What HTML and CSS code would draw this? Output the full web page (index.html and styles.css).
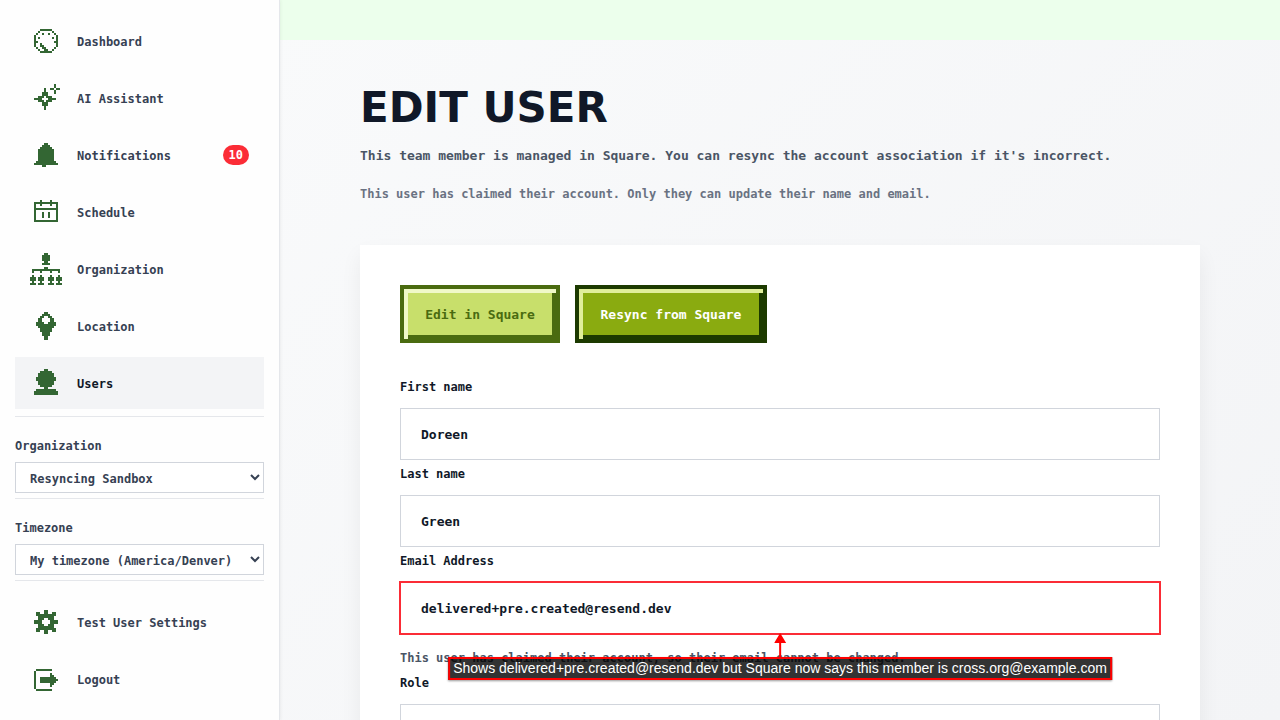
FILE: index.html
```html
<!DOCTYPE html>
<html lang="en">
<head>
    <meta charset="UTF-8">
    <meta name="viewport" content="width=device-width, initial-scale=1.0">
    <title>Edit User</title>
    <link rel="stylesheet" href="styles.css">
</head>
<body>

<div class="app">
    <aside class="sidebar">
        <nav class="nav">
            <a class="nav-item" href="#">
                <svg class="icon" viewBox="0 -.5 16 16"><path d="M5 2h6M4 3h1M11 3h1M3 4h1M6 4h1M9 4h1M12 4h1M2 5h1M13 5h1M2 6h1M4 6h1M11 6h1M13 6h1M2 7h1M13 7h1M2 8h2M12 8h2M2 9h1M5 9h1M13 9h1M2 10h1M5 10h2M13 10h1M3 11h1M6 11h2M12 11h1M4 12h1M7 12h2M11 12h1M5 13h6"/></svg>
                <span class="nav-text">Dashboard</span>
            </a>
            <a class="nav-item" href="#">
                <svg class="icon" viewBox="0 -.5 16 16"><path d="M12 1h1M12 2h1M10 3h2M13 3h2M12 4h1M12 5h1M7 3h1M7 4h1M6 5h3M6 6h3M4 7h3M8 7h3M2 8h4M9 8h4M4 9h3M8 9h3M6 10h3M6 11h3M7 12h1M7 13h1"/></svg>
                <span class="nav-text">AI Assistant</span>
            </a>
            <a class="nav-item" href="#">
                <svg class="icon" viewBox="0 -.5 16 16"><path d="M7 2h2M6 3h4M5 4h6M4 5h8M4 6h8M4 7h8M4 8h8M4 9h8M4 10h8M3 11h10M2 12h12M6 13h2"/></svg>
                <span class="nav-text">Notifications</span>
                <span class="badge">10</span>
            </a>
            <a class="nav-item" href="#">
                <svg class="icon" viewBox="0 -.5 16 16"><path d="M5 2h1M10 2h1M2 3h12M2 4h1M5 4h1M10 4h1M13 4h1M2 5h1M13 5h1M2 6h12M2 7h1M13 7h1M2 8h1M6 8h1M9 8h1M13 8h1M2 9h1M6 9h1M9 9h1M13 9h1M2 10h1M6 10h1M9 10h1M13 10h1M2 11h1M13 11h1M2 12h12"/></svg>
                <span class="nav-text">Schedule</span>
            </a>
            <a class="nav-item" href="#">
                <svg class="icon" viewBox="0 -.5 16 16"><path d="M7 0h2M6 1h4M6 2h4M6 3h4M7 4h2M6 5h4M7 7h2M1 8h14M1 9h1M5 9h1M10 9h1M14 9h1M1 11h1M5 11h1M10 11h1M14 11h1M0 12h3M4 12h3M9 12h3M13 12h3M0 13h3M4 13h3M9 13h3M13 13h3M1 14h1M5 14h1M10 14h1M14 14h1M0 15h3M4 15h3M9 15h3M13 15h3"/></svg>
                <span class="nav-text">Organization</span>
            </a>
            <a class="nav-item" href="#">
                <svg class="icon" viewBox="0 -.5 16 16"><path d="M7 1h2M6 2h4M5 3h2M9 3h2M4 4h2M10 4h2M4 5h2M10 5h2M3 6h4M9 6h4M3 7h10M4 8h8M5 9h6M5 10h6M6 11h4M6 12h4M7 13h2M7 14h2"/></svg>
                <span class="nav-text">Location</span>
            </a>
            <a class="nav-item active" href="#">
                <svg class="icon" viewBox="0 -.5 16 16"><path d="M7 1h2M5 2h6M4 3h8M4 4h8M3 5h10M3 6h10M4 7h8M4 8h8M5 9h6M7 10h2M3 11h10M2 12h12M2 13h12"/></svg>
                <span class="nav-text">Users</span>
            </a>
        </nav>

        <div class="picker">
            <label for="organization">Organization</label>
            <select id="organization">
                <option>Resyncing Sandbox</option>
            </select>
        </div>
        <div class="picker">
            <label for="timezone">Timezone</label>
            <select id="timezone">
                <option>My timezone (America/Denver)</option>
            </select>
        </div>

        <nav class="nav nav-bottom">
            <a class="nav-item" href="#">
                <svg class="icon" viewBox="0 -.5 16 16"><path d="M7 2h2M3 3h2M7 3h2M11 3h2M3 4h10M4 5h8M4 6h3M9 6h3M2 7h4M10 7h4M2 8h4M10 8h4M4 9h3M9 9h3M4 10h8M3 11h10M3 12h2M7 12h2M11 12h2M7 13h2"/></svg>
                <span class="nav-text">Test User Settings</span>
            </a>
            <a class="nav-item" href="#">
                <svg class="icon" viewBox="0 -.5 16 16"><path d="M3 3h8M2 4h1M2 5h1M10 5h1M2 6h1M10 6h2M2 7h1M5 7h8M2 8h1M5 8h9M2 9h1M5 9h8M2 10h1M10 10h2M2 11h1M10 11h1M2 12h1M3 13h8"/></svg>
                <span class="nav-text">Logout</span>
            </a>
        </nav>
    </aside>

    <div class="content">
        <div class="topbar"></div>
        <main class="page">
            <h1>EDIT USER</h1>
            <p class="lead">This team member is managed in Square. You can resync the account association if it's incorrect.</p>
            <p class="note">This user has claimed their account. Only they can update their name and email.</p>

            <form class="card">
                <div class="actions">
                    <button type="button" class="btn btn-light">Edit in Square</button>
                    <button type="button" class="btn btn-dark">Resync from Square</button>
                </div>

                <label for="first-name">First name</label>
                <input type="text" id="first-name" value="Doreen">

                <label for="last-name">Last name</label>
                <input type="text" id="last-name" value="Green">

                <label for="email">Email Address</label>
                <div class="callout-anchor">
                    <input type="email" id="email" class="highlight" value="delivered+pre.created@resend.dev">
                    <div class="callout">
                        <svg class="arrow" viewBox="0 0 12 24"><path d="M6 0l6 10H7v14H5V10H0z"/></svg>
                        <div class="callout-text">Shows delivered+pre.created@resend.dev but Square now says this member is cross.org@example.com</div>
                    </div>
                </div>
                <p class="help">This user has claimed their account, so their email cannot be changed.</p>

                <label for="role">Role</label>
                <select id="role" class="field">
                    <option></option>
                </select>
            </form>
        </main>
    </div>
</div>

</body>
</html>
```
FILE: styles.css
```css
* {
    box-sizing: border-box;
}

body {
    margin: 0;
    font-family: "DejaVu Sans Mono", monospace;
    font-size: 12px;
    font-weight: bold;
    line-height: 20px;
    color: #364153;
}

.app {
    display: flex;
    height: 100vh;
    overflow: hidden;
}

/* Sidebar */
.sidebar {
    position: relative;
    z-index: 1;
    flex: 0 0 280px;
    padding: 15px;
    background: #fefefe;
    border-right: 1px solid #e5e7eb;
    box-shadow: 1px 0 3px rgba(0, 0, 0, 0.05);
}

.nav {
    display: flex;
    flex-direction: column;
    gap: 5px;
    margin-bottom: 7px;
}

.nav-bottom {
    border-top: 1px solid #e5e7eb;
    padding-top: 15px;
}

.nav-item {
    display: flex;
    align-items: center;
    gap: 15px;
    height: 52px;
    padding: 0 15px;
    color: #364153;
    text-decoration: none;
}

.nav-item.active {
    background: #f3f4f6;
    color: #101828;
}

.nav-text {
    padding-top: 2px;
}

.icon {
    width: 32px;
    height: 32px;
    stroke: #336633;
    stroke-width: 1;
    shape-rendering: crispEdges;
}

.badge {
    margin-left: auto;
    padding: 0 6px;
    border-radius: 10px;
    background: #fb2c36;
    color: #fff;
}

.picker {
    border-top: 1px solid #e5e7eb;
    padding: 19px 0 5px;
}

.picker label {
    display: block;
    margin-bottom: 6px;
}

.picker select {
    display: block;
    width: 100%;
    height: 31px;
    padding: 2px 10px 0;
    border: 1px solid #d1d5dc;
    border-radius: 0;
    background-color: #fff;
    color: #364153;
    font: inherit;
}

/* Page */
.content {
    flex: 1;
    min-width: 0;
    background: linear-gradient(135deg, #f9fafb, #f3f4f6);
}

.topbar {
    height: 40px;
    background: #ecffec;
}

.page {
    padding: 40px 80px;
}

h1 {
    margin: 0;
    font-family: "DejaVu Sans", sans-serif;
    font-size: 42px;
    line-height: 56px;
    color: #101828;
}

.lead {
    margin: 8px 0 16px;
    font-size: 13px;
    line-height: 24px;
    color: #4a5565;
}

.note {
    margin: 0 0 41px;
    color: #6a7282;
}

.card {
    padding: 40px;
    background: #fff;
    box-shadow: 0 10px 20px rgba(0, 0, 0, 0.06);
}

.actions {
    display: flex;
    gap: 15px;
    margin-bottom: 30px;
}

.btn {
    min-width: 160px;
    height: 58px;
    padding: 2px 20px 0;
    border: 4px solid;
    font: inherit;
    font-size: 13px;
    cursor: pointer;
}

.btn-light {
    border-color: #4a6b10;
    background: #c8df6b;
    box-shadow: inset 4px 4px 0 #f0f9c8, inset -4px -4px 0 #4a6b10;
    color: #4a6b10;
}

.btn-dark {
    min-width: 192px;
    border-color: #1c3a00;
    background: #8aab10;
    box-shadow: inset 4px 4px 0 #e0ee9a, inset -4px -4px 0 #1c3a00;
    color: #fff;
}

.card label {
    display: block;
    padding: 4px 0 11px;
    color: #101828;
}

.card input,
.field {
    display: block;
    width: 100%;
    height: 52px;
    padding: 0 20px;
    border: 1px solid #d1d5dc;
    border-radius: 0;
    background-color: #fff;
    color: #101828;
    font: inherit;
    font-size: 13px;
}

.card .highlight {
    border-color: #fb2c36;
    outline: 1px solid #fb2c36;
}

.help {
    margin: 0;
    padding: 14px 0 1px;
    color: #4a5565;
}

/* Callout pointing at the email field */
.callout-anchor {
    position: relative;
}

.callout {
    position: absolute;
    top: 51px;
    left: 50%;
    display: flex;
    flex-direction: column;
    align-items: center;
    transform: translateX(-50%);
}

.arrow {
    width: 12px;
    height: 24px;
    fill: #f00;
}

.callout-text {
    padding: 0 3px;
    border: 2px solid #f00;
    background: rgba(0, 0, 0, 0.8);
    box-shadow: 0 1px 2px rgba(0, 0, 0, 0.4);
    color: #fff;
    font-family: "Liberation Sans", Arial, sans-serif;
    font-size: 14px;
    font-weight: normal;
    line-height: 19px;
    white-space: nowrap;
}
```
